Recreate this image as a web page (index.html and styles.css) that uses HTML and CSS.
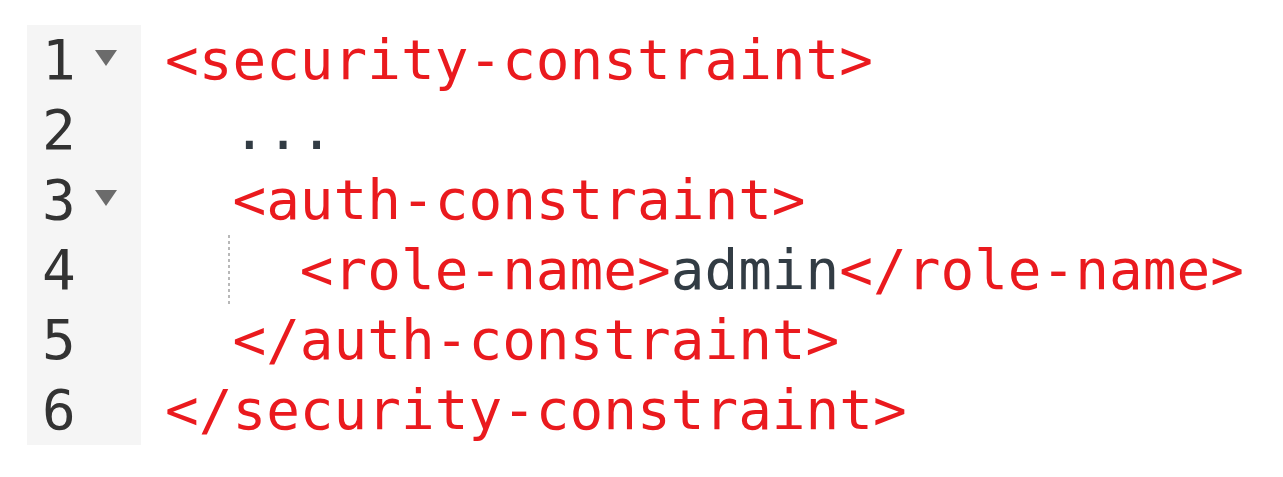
FILE: index.html
```html
<!DOCTYPE html>
<html>
<head>
<meta charset="utf-8">
<link rel="stylesheet" href="styles.css">
</head>
<body>
<div class="editor">
  <div class="gutter">
    <div class="gl"><span class="num">1</span><span class="fold"></span></div>
    <div class="gl"><span class="num">2</span></div>
    <div class="gl"><span class="num">3</span><span class="fold"></span></div>
    <div class="gl"><span class="num">4</span></div>
    <div class="gl"><span class="num">5</span></div>
    <div class="gl"><span class="num">6</span></div>
  </div>
  <div class="code">
    <div class="line"><span class="tag">&lt;security-constraint&gt;</span></div>
    <div class="line"><span class="ind"></span><span class="txt">...</span></div>
    <div class="line"><span class="ind"></span><span class="tag">&lt;auth-constraint&gt;</span></div>
    <div class="line"><span class="ind guide"></span><span class="ind"></span><span class="tag">&lt;role-name&gt;</span><span class="txt">admin</span><span class="tag">&lt;/role-name&gt;</span></div>
    <div class="line"><span class="ind"></span><span class="tag">&lt;/auth-constraint&gt;</span></div>
    <div class="line"><span class="tag">&lt;/security-constraint&gt;</span></div>
  </div>
</div>
</body>
</html>
```
FILE: styles.css
```css
html, body {
  margin: 0;
  padding: 0;
  background: #ffffff;
}
.editor {
  display: flex;
  margin: 25px 0 0 27px;
  font-family: "DejaVu Sans Mono", "Liberation Mono", monospace;
  font-size: 56px;
}
.gutter {
  width: 114px;
  background: #f5f5f5;
  box-sizing: border-box;
  padding-left: 15px;
}
.gl {
  height: 70px;
  display: flex;
  align-items: center;
  color: #333333;
}
.num {
  width: 53px;
  line-height: 70px;
}
.fold {
  width: 0;
  height: 0;
  border-left: 11px solid transparent;
  border-right: 11px solid transparent;
  border-top: 16px solid #6b6b6b;
  margin-top: -4px;
}
.code {
  padding-left: 24px;
}
.line {
  height: 70px;
  line-height: 70px;
  white-space: pre;
  display: flex;
}
.ind {
  display: inline-block;
  width: 2ch;
  height: 70px;
}
.guide {
  background-image: linear-gradient(to bottom, #b8b8b8 50%, transparent 50%);
  background-size: 2px 6px;
  background-repeat: repeat-y;
  background-position: right 2px top 0;
}
.tag {
  color: #ea1a1e;
}
.txt {
  color: #323c44;
}
```
